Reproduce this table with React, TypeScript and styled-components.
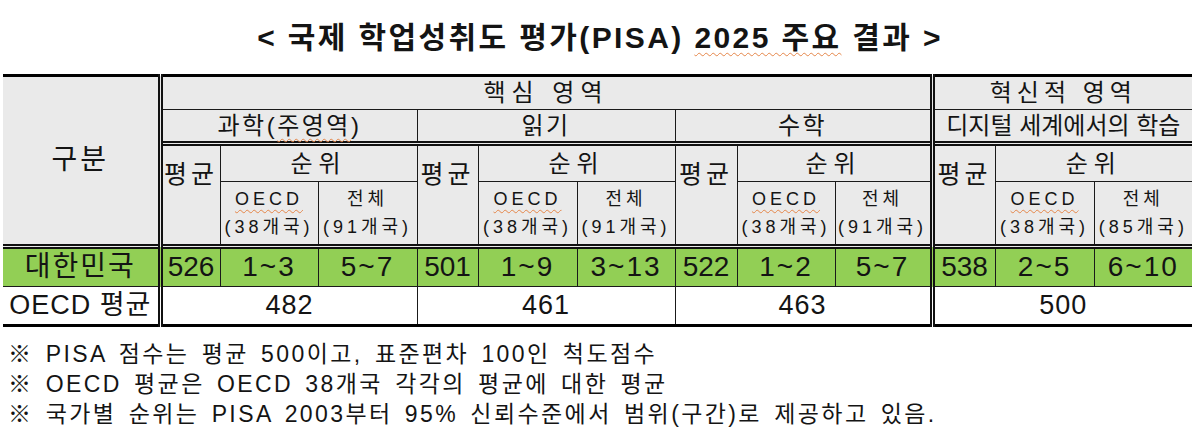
import { createGlobalStyle, styled } from "styled-components";

const GlobalStyle = createGlobalStyle`
  body {
    margin: 0;
    background: #ffffff;
    font-family: "Liberation Sans", "Noto Sans CJK KR", sans-serif;
    color: #141414;
  }
`;

const Page = styled("div")`
  width: 1200px;
  height: 438px;
  overflow: hidden;
`;

const Title = styled("h1")`
  margin: 0;
  height: 74px;
  box-sizing: border-box;
  padding-top: 22px;
  font-size: 30px;
  line-height: 32px;
  font-weight: 700;
  text-align: center;
  letter-spacing: 2.4px;
`;

const Spell = styled("span")`
  text-decoration: underline wavy #e5864a;
  text-decoration-thickness: 1px;
  text-underline-offset: 4px;
`;

const Table = styled("table")`
  margin-left: 3px;
  width: 1189px;
  table-layout: fixed;
  border-collapse: collapse;
  border-top: 3px solid #000;
  border-bottom: 3px solid #000;
`;

type Tone = "gray" | "green" | "white";

const tones: Record<Tone, string> = {
  gray: "#eaeaea",
  green: "#92cf55",
  white: "#ffffff",
};

const Cell = styled("td")<{
  $tone?: Tone;
  $size?: number;
  $ls?: number;
  $dblLeft?: boolean;
  $dblTop?: boolean;
  $edge?: "left" | "right";
  $top?: boolean;
}>`
  padding: 0;
  text-align: center;
  vertical-align: ${(p) => (p.$top ? "top" : "middle")};
  padding-top: ${(p) => (p.$top ? "14px" : "0")};
  background: ${(p) => tones[p.$tone || "gray"]};
  font-size: ${(p) => p.$size || 24}px;
  line-height: 1.15;
  letter-spacing: ${(p) => (p.$ls ?? 3)}px;
  font-weight: 400;
  white-space: nowrap;
  border: 1px solid #1a1a1a;
  border-left: ${(p) =>
    p.$edge === "left" ? "none" : p.$dblLeft ? "5px double #111" : "1px solid #1a1a1a"};
  border-right: ${(p) => (p.$edge === "right" ? "none" : "1px solid #1a1a1a")};
  border-top: ${(p) => (p.$dblTop ? "5px double #111" : "1px solid #1a1a1a")};
`;

const Small = styled("div")`
  font-size: 18px;
  line-height: 28px;
  letter-spacing: 4px;
`;

const Notes = styled("div")`
  padding: 12px 0 0 8px;
  font-size: 23px;
  line-height: 30px;
  letter-spacing: 2.4px;
  word-spacing: 3.5px;
`;

const colWidths = [157, 60, 98, 99, 61, 99, 98, 62, 98, 97, 63, 99, 98];

const groups = [
  { name: "과학", spell: "주영역", total: "91", avg: "526", oecd: "1~3", all: "5~7", mean: "482" },
  { name: "읽기", total: "91", avg: "501", oecd: "1~9", all: "3~13", mean: "461" },
  { name: "수학", total: "91", avg: "522", oecd: "1~2", all: "5~7", mean: "463" },
  { name: "디지털 세계에서의 학습", total: "85", avg: "538", oecd: "2~5", all: "6~10", mean: "500" },
];

const notes = [
  "※ PISA 점수는 평균 500이고, 표준편차 100인 척도점수",
  "※ OECD 평균은 OECD 38개국 각각의 평균에 대한 평균",
  "※ 국가별 순위는 PISA 2003부터 95% 신뢰수준에서 범위(구간)로 제공하고 있음.",
];

const App = () => {
  return (
    <Page>
      <GlobalStyle />
      <Title>
        &lt; 국제 학업성취도 평가(PISA) <Spell>2025 주요</Spell> 결과 &gt;
      </Title>
      <Table>
        <colgroup>
          {colWidths.map((w, i) => (
            <col key={i} style={{ width: w }} />
          ))}
        </colgroup>
        <tbody>
          <tr style={{ height: 34 }}>
            <Cell rowSpan={4} $edge="left" $size={28} $ls={3}>
              구분
            </Cell>
            <Cell colSpan={9} $dblLeft $ls={6}>
              핵심 영역
            </Cell>
            <Cell colSpan={3} $dblLeft $edge="right" $ls={5}>
              혁신적 영역
            </Cell>
          </tr>
          <tr style={{ height: 34 }}>
            {groups.map((g, i) => (
              <Cell
                key={g.name}
                colSpan={3}
                $dblLeft={i === 0 || i === 3}
                $edge={i === 3 ? "right" : undefined}
                $ls={i === 3 ? 0 : 2.5}
              >
                {g.name}
                {g.spell && (
                  <>
                    (<Spell>{g.spell}</Spell>)
                  </>
                )}
              </Cell>
            ))}
          </tr>
          <tr style={{ height: 38 }}>
            {groups.map((g, i) => [
              <Cell key={g.name + "a"} rowSpan={2} $dblTop $dblLeft={i === 0 || i === 3} $top $size={25} $ls={4}>
                평균
              </Cell>,
              <Cell key={g.name + "r"} colSpan={2} $dblTop $edge={i === 3 ? "right" : undefined} $ls={6}>
                순위
              </Cell>,
            ])}
          </tr>
          <tr style={{ height: 65 }}>
            {groups.map((g, i) => [
              <Cell key={g.name + "o"}>
                <Small>
                  <Spell>OECD</Spell>
                </Small>
                <Small>(38개국)</Small>
              </Cell>,
              <Cell key={g.name + "t"} $edge={i === 3 ? "right" : undefined}>
                <Small>전체</Small>
                <Small>({g.total}개국)</Small>
              </Cell>,
            ])}
          </tr>
          <tr style={{ height: 40 }}>
            <Cell $tone="green" $edge="left" $dblTop $size={28} $ls={2}>
              대한민국
            </Cell>
            {groups.map((g, i) => [
              <Cell key={g.name + "a"} $tone="green" $dblTop $dblLeft={i === 0 || i === 3} $size={28} $ls={0}>
                {g.avg}
              </Cell>,
              <Cell key={g.name + "o"} $tone="green" $dblTop $size={28} $ls={2}>
                {g.oecd}
              </Cell>,
              <Cell key={g.name + "l"} $tone="green" $dblTop $edge={i === 3 ? "right" : undefined} $size={28} $ls={2}>
                {g.all}
              </Cell>,
            ])}
          </tr>
          <tr style={{ height: 39 }}>
            <Cell $tone="white" $edge="left" $size={27} $ls={1}>
              OECD 평균
            </Cell>
            {groups.map((g, i) => (
              <Cell
                key={g.name}
                colSpan={3}
                $tone="white"
                $dblLeft={i === 0 || i === 3}
                $edge={i === 3 ? "right" : undefined}
                $size={27}
                $ls={1}
              >
                {g.mean}
              </Cell>
            ))}
          </tr>
        </tbody>
      </Table>
      <Notes>
        {notes.map((n) => (
          <div key={n}>{n}</div>
        ))}
      </Notes>
    </Page>
  );
};

export default App;
